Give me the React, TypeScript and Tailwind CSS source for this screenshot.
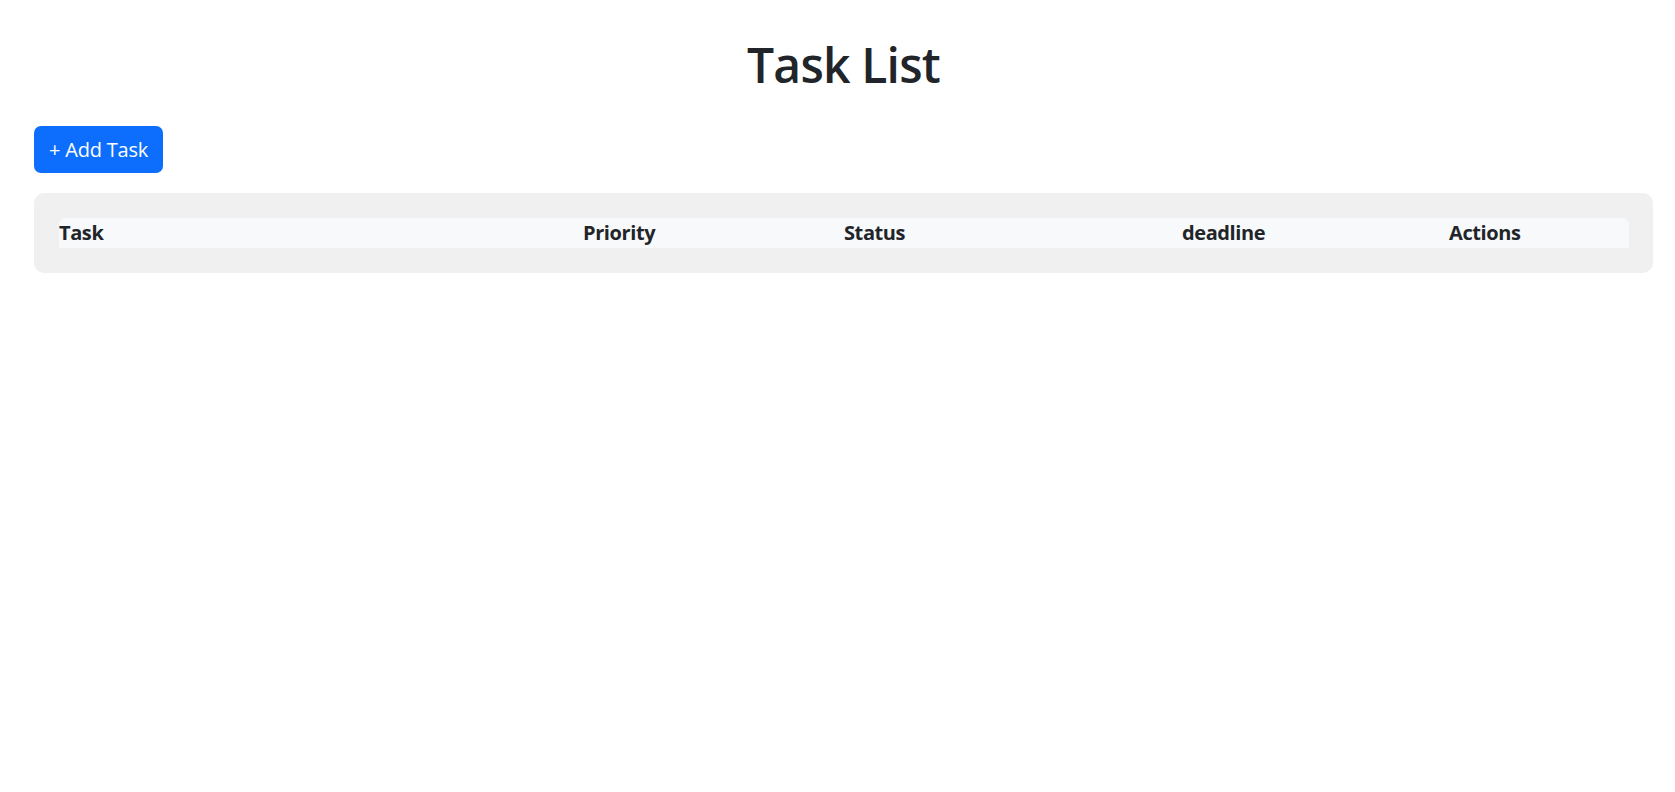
import React from 'react';

const columns = [
  { label: 'Task', width: 'w-[524px]' },
  { label: 'Priority', width: 'w-[261px]' },
  { label: 'Status', width: 'w-[338px]' },
  { label: 'deadline', width: 'w-[267px]' },
  { label: 'Actions', width: '' },
];

export default function App() {
  return (
    <div className="min-h-screen bg-white text-[#212529] font-['Open_Sans',sans-serif] pt-[35px] pl-[34px] pr-[22px]">
      <h1 className="text-center text-[48px] leading-[60px] font-semibold tracking-[-0.8px] mb-[31px]">Task List</h1>

      <button className="h-[47px] px-[15px] rounded-[7px] bg-[#0d6efd] text-white text-[20px] leading-[30px] tracking-[-0.2px]">
        + Add Task
      </button>

      <div className="mt-[20px] bg-[#f0f0f0] rounded-[10px] p-[25px] pr-[24px]">
        <table className="w-full border-collapse">
          <thead>
            <tr>
              {columns.map((col, i) => (
                <th
                  key={col.label}
                  className={`${col.width} p-0 text-left text-[20px] leading-[30px] font-bold tracking-[-0.4px] bg-[#f8f9fa] ${i === 0 ? 'rounded-tl-[6px]' : ''} ${i === columns.length - 1 ? 'rounded-tr-[6px]' : ''}`}
                >
                  {col.label}
                </th>
              ))}
            </tr>
          </thead>
          <tbody></tbody>
        </table>
      </div>
    </div>
  );
}
